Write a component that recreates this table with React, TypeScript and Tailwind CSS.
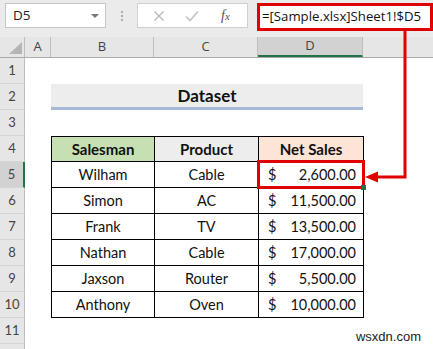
import { ReactNode } from "react";

const rows = [
  { name: "Wilham", product: "Cable", amount: "2,600.00" },
  { name: "Simon", product: "AC", amount: "11,500.00" },
  { name: "Frank", product: "TV", amount: "13,500.00" },
  { name: "Nathan", product: "Cable", amount: "17,000.00" },
  { name: "Jaxson", product: "Router", amount: "5,500.00" },
  { name: "Anthony", product: "Oven", amount: "10,000.00" },
];

const RowHead = ({ n, active }: { n?: number; active?: boolean }) => (
  <div
    className={`w-[25px] shrink-0 h-full flex items-center justify-center text-[13px] text-[#444] border-b border-[#d4d4d4] ${
      active ? "bg-[#d2d2d2] border-r-2 border-r-[#217346]" : "bg-[#e6e6e6] border-r border-r-[#bdbdbd]"
    }`}
  >
    {n}
  </div>
);

const SheetRow = ({ n, active, children }: { n?: number; active?: boolean; children?: ReactNode }) => (
  <div className="flex h-[26px]">
    <RowHead n={n} active={active} />
    <div className="w-[26px] shrink-0" />
    {children}
  </div>
);

export default function App() {
  return (
    <div className="relative w-[433px] h-[349px] overflow-hidden bg-white font-['Lato',sans-serif]">
      {/* formula bar */}
      <div className="h-[37px] bg-[#ebebeb] flex items-start pt-[3px] pl-[5px] font-['Open_Sans',sans-serif]">
        <div className="w-[101px] h-[25px] bg-white border border-[#c6c6c6] flex items-center justify-between pl-[7px] pr-[6px] text-[13.5px] text-[#222]">
          <span>D5</span>
          <span className="w-0 h-0 border-l-[4px] border-r-[4px] border-t-[4px] border-l-transparent border-r-transparent border-t-[#777]" />
        </div>
        <div className="w-[31px] h-[25px] flex flex-col items-center justify-center gap-[2px]">
          <span className="w-[2px] h-[2px] bg-[#aaa]" />
          <span className="w-[2px] h-[2px] bg-[#aaa]" />
          <span className="w-[2px] h-[2px] bg-[#aaa]" />
        </div>
        <div className="w-[111px] h-[25px] bg-white border border-[#d0d0d0] flex items-center text-[#aaa]">
          <svg width="12" height="12" viewBox="0 0 12 12" className="ml-[15px]">
            <path d="M1.5 1.5 L10.5 10.5 M10.5 1.5 L1.5 10.5" stroke="#b8b8b8" strokeWidth="1.3" fill="none" />
          </svg>
          <svg width="14" height="12" viewBox="0 0 14 12" className="ml-[20px]">
            <path d="M1 6.5 L5 10.5 L13 1.5" stroke="#c4c4c4" strokeWidth="1.6" fill="none" />
          </svg>
          <span className="ml-[22px] font-['Liberation_Serif',serif] italic text-[14px] text-[#555]">
            f<span className="text-[11px]">x</span>
          </span>
        </div>
        <div className="ml-[9px] w-[176px] h-[28px] bg-white border-[3px] border-[#e00000] flex items-center pl-[2px] text-[13.2px] text-[#111] whitespace-nowrap">
          =[Sample.xlsx]Sheet1!$D5
        </div>
      </div>

      {/* column headers */}
      <div className="flex h-[21px] bg-[#e6e6e6] border-b border-[#ababab] text-[13px] text-[#444] font-['Open_Sans',sans-serif]">
        <div className="w-[25px] shrink-0 border-r border-[#bdbdbd] relative">
          <svg width="13" height="12" viewBox="0 0 13 12" className="absolute left-[9px] bottom-[3px]">
            <path d="M13 0 L13 12 L0 12 Z" fill="#b5b5b5" />
          </svg>
        </div>
        <div className="w-[26px] shrink-0 border-r border-[#bdbdbd] flex items-center justify-center">A</div>
        <div className="w-[103px] shrink-0 border-r border-[#bdbdbd] flex items-center justify-center">B</div>
        <div className="w-[104px] shrink-0 border-r border-[#bdbdbd] flex items-center justify-center">C</div>
        <div className="w-[105px] shrink-0 border-r border-[#bdbdbd] bg-[#d2d2d2] border-b-2 border-b-[#217346] flex items-center justify-center">D</div>
        <div className="flex-1" />
      </div>

      {/* sheet */}
      <div className="text-[14.5px] text-[#111]">
        <SheetRow n={1} />
        <SheetRow n={2}>
          <div className="w-[312px] h-full bg-[#ededed] border-b-[3px] border-[#a6b8d8] flex items-center justify-center font-bold text-[17px]">
            Dataset
          </div>
        </SheetRow>
        <SheetRow n={3} />
        <SheetRow n={4}>
          <div className="flex w-[313px] h-full border border-black font-bold text-[15px]">
            <div className="w-[103px] bg-[#c6e0b4] border-r border-black flex items-center justify-center">Salesman</div>
            <div className="w-[104px] bg-[#ededed] border-r border-black flex items-center justify-center">Product</div>
            <div className="flex-1 bg-[#fce4d6] flex items-center justify-center">Net Sales</div>
          </div>
        </SheetRow>
        {rows.map((r, i) => (
          <SheetRow key={r.name} n={i + 5} active={i === 0}>
            <div className="flex w-[313px] h-full border-x border-b border-black">
              <div className="w-[103px] border-r border-black flex items-center justify-center">{r.name}</div>
              <div className="w-[104px] border-r border-black flex items-center justify-center">{r.product}</div>
              <div
                className={`relative flex-1 flex items-center justify-between pl-[9px] pr-[7px] ${
                  i === 0 ? "outline-[3px] outline-[#e00000] -outline-offset-[1px]" : ""
                }`}
              >
                <span>$</span>
                <span>{r.amount}</span>
                {i === 0 && <span className="absolute -right-[3px] -bottom-[3px] w-[5px] h-[5px] bg-[#217346]" />}
              </div>
            </div>
          </SheetRow>
        ))}
        <SheetRow n={11} />
        <SheetRow />
      </div>

      {/* red arrow */}
      <svg className="absolute left-0 top-0 pointer-events-none" width="433" height="349" viewBox="0 0 433 349">
        <path d="M405 31 L405 177 L376 177" stroke="#e00000" strokeWidth="3" fill="none" />
        <path d="M365 177 L378 171.5 L378 182.5 Z" fill="#e00000" />
      </svg>

      <div className="absolute right-[12px] bottom-[3px] text-[13px] text-[#222] font-['Liberation_Sans',sans-serif]">
        wsxdn.com
      </div>
    </div>
  );
}
